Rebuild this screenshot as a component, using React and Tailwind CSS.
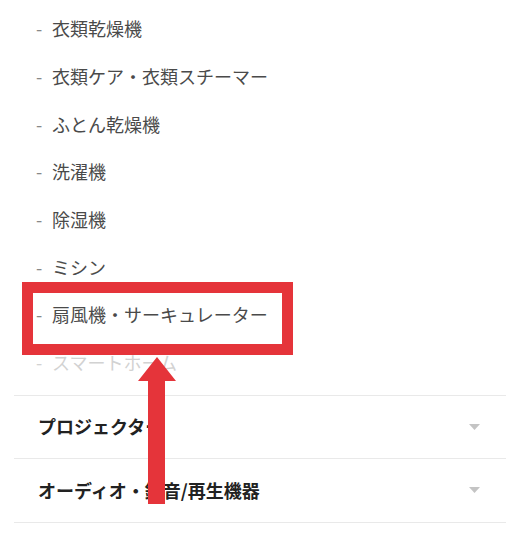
const items = [
  '衣類乾燥機',
  '衣類ケア・衣類スチーマー',
  'ふとん乾燥機',
  '洗濯機',
  '除湿機',
  'ミシン',
  '扇風機・サーキュレーター',
];

function Caret() {
  return (
    <svg width="11" height="6" viewBox="0 0 11 6" className="mr-[26px]">
      <path d="M0 0 L11 0 L5.5 6 Z" fill="#c4c4c4" />
    </svg>
  );
}

export default function App() {
  return (
    <div
      className="relative w-[520px] h-[537px] overflow-hidden bg-white"
      style={{ fontFamily: '"Noto Sans CJK JP", "Noto Sans", sans-serif' }}
    >
      <ul className="pt-[5px] pb-[8px] pl-[36px]">
        {items.map((t) => (
          <li key={t} className="flex items-center h-[47.7px] text-[18px] text-[#4a4a4a]">
            <span className="w-[16px] text-[#888]">-</span>
            <span>{t}</span>
          </li>
        ))}
        <li className="flex items-center h-[47.7px] text-[18px] text-[#d2d2d2]">
          <span className="w-[16px]">-</span>
          <span>スマートホーム</span>
        </li>
      </ul>

      <div className="mx-[14px] border-t border-[#e9e9e9]">
        <div className="flex items-center justify-between h-[63px] border-b border-[#e9e9e9] pl-[24px]">
          <span className="text-[18px] font-bold text-[#222]">プロジェクター</span>
          <Caret />
        </div>
        <div className="flex items-center justify-between h-[64px] border-b border-[#e9e9e9] pl-[24px]">
          <span className="text-[18px] font-bold text-[#222]">オーディオ・録音/再生機器</span>
          <Caret />
        </div>
      </div>

      <div className="absolute left-[22px] top-[282px] w-[271px] h-[73px] border-[11px] border-[#e5343a]" />

      <svg className="absolute left-[137px] top-[357px]" width="40" height="148" viewBox="0 0 40 148">
        <path d="M20 0 L39 24 L28 24 L28 147 L11 147 L11 24 L1 24 Z" fill="#e5343a" />
      </svg>
    </div>
  );
}
